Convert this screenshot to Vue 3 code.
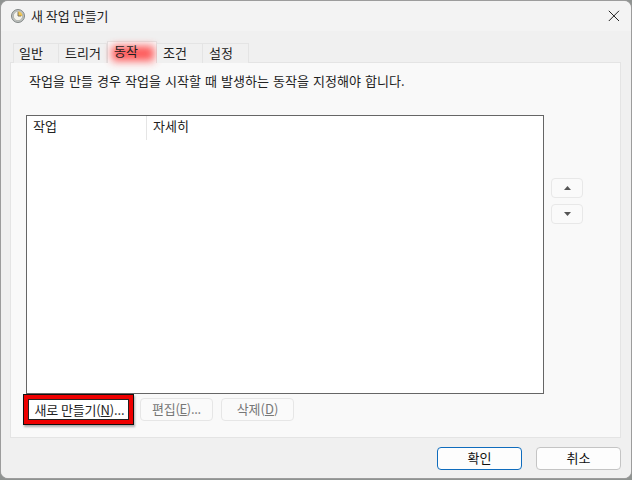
<script setup>
const tabs = [
  { label: '일반', w: 46 },
  { label: '트리거', w: 48 },
  { label: '동작', w: 50, active: true },
  { label: '조건', w: 46 },
  { label: '설정', w: 46 }
]
</script>

<template>
  <div class="desk">
    <div class="win">
      <div class="title">
        <svg class="clock" width="14" height="14" viewBox="0 0 16 16">
          <circle cx="8" cy="8" r="7.4" fill="#c4c8c6" stroke="#6f7573" />
          <circle cx="8" cy="8" r="5.3" fill="#f4f3ec" stroke="#8d8f8a" stroke-width=".6" />
          <path d="M8 8V2.9A5.1 5.1 0 0 1 13.1 8Z" fill="#f0c552" />
          <path d="M8 3.6V8H11.6" fill="none" stroke="#6a655a" stroke-width="1" />
        </svg>
        <span class="title-text">새 작업 만들기</span>
        <svg class="close" width="12" height="12" viewBox="0 0 12 12">
          <path d="M.8.8 11 11M11 .8.8 11" stroke="#222" stroke-width="1" fill="none" />
        </svg>
      </div>
      <div class="body">
        <div class="tabs">
          <div
            v-for="t in tabs"
            :key="t.label"
            class="tab"
            :class="{ active: t.active }"
            :style="{ width: t.w + 'px' }"
          >
            <span v-if="t.active" class="glow"></span>
            <span class="tab-label">{{ t.label }}</span>
          </div>
        </div>
        <div class="panel">
          <p class="desc">작업을 만들 경우 작업을 시작할 때 발생하는 동작을 지정해야 합니다.</p>
          <div class="mid">
            <div class="list">
              <div class="head">
                <div class="col c1">작업</div>
                <div class="col c2">자세히</div>
              </div>
            </div>
            <div class="arrows">
              <div class="arrow">
                <svg width="7" height="4" viewBox="0 0 7 4"><path d="M3.5 0 7 4H0Z" fill="#555" /></svg>
              </div>
              <div class="arrow">
                <svg width="7" height="4" viewBox="0 0 7 4"><path d="M0 0H7L3.5 4Z" fill="#555" /></svg>
              </div>
            </div>
          </div>
          <div class="actions">
            <div class="btn new">새로 만들기(<u>N</u>)...</div>
            <div class="btn off edit">편집(<u>E</u>)...</div>
            <div class="btn off">삭제(<u>D</u>)</div>
          </div>
        </div>
        <div class="foot">
          <div class="fbtn ok">확인</div>
          <div class="fbtn">취소</div>
        </div>
      </div>
    </div>
  </div>
</template>

<style>
html, body { margin: 0; background: #8f9391; }
</style>

<style scoped>
.desk {
  width: 632px;
  height: 480px;
  padding: 1px 1px 2px 1px;
  box-sizing: border-box;
  font-family: "Noto Sans CJK KR", "Noto Sans", sans-serif;
  font-size: 13px;
  color: #111;
}
.win {
  height: 100%;
  display: flex;
  flex-direction: column;
  background: #f0f0f0;
  border-radius: 7px;
  overflow: hidden;
  box-shadow: 0 0 0 1px #9c9c9c;
}
.title {
  height: 30px;
  flex: none;
  display: flex;
  align-items: center;
  padding: 0 11px 0 10px;
  background: #f3f3f3;
}
.clock { flex: none; }
.title-text { margin: 0 0 2px 6px; flex: 1; font-size: 13px; color: #222; }
.body {
  flex: 1;
  display: flex;
  flex-direction: column;
  padding: 11px 10px 0 9px;
  background: #f0f0f0;
}
.tabs {
  display: flex;
  height: 20px;
  padding-left: 3px;
  flex: none;
  position: relative;
  z-index: 1;
}
.tab {
  position: relative;
  box-sizing: border-box;
  height: 20px;
  margin-top: 1px;
  padding-left: 6px;
  border: 1px solid #e4e4e4;
  border-bottom: none;
  border-left: none;
  line-height: 17px;
  background: #f0f0f0;
  color: #222;
  white-space: nowrap;
}
.tab:first-child { border-left: 1px solid #e4e4e4; padding-left: 5px; }
.tab.active {
  height: 22px;
  margin-top: -1px;
  background: #f9f9f9;
  border-left: 1px solid #e0e0e0;
  line-height: 17px;
}
.glow {
  position: absolute;
  left: 4px;
  top: 4px;
  width: 42px;
  height: 15px;
  background: #ff3b3b;
  filter: blur(4px);
  opacity: .85;
}
.tab-label { position: relative; }
.panel {
  height: 376px;
  flex: none;
  box-sizing: border-box;
  background: #f9f9f9;
  border: 1px solid #e4e4e4;
  padding: 0 0 0 15px;
  display: flex;
  flex-direction: column;
}
.desc {
  margin: 9px 0 0 3px;
  height: 18px;
  line-height: 18px;
  font-size: 13px;
  word-spacing: 1.2px;
  color: #222;
  white-space: nowrap;
}
.mid {
  display: flex;
  margin-top: 25px;
  height: 280px;
}
.list {
  width: 518px;
  height: 279px;
  box-sizing: border-box;
  background: #fff;
  border: 1px solid #666;
}
.head { display: flex; height: 24px; }
.col { box-sizing: border-box; padding-left: 6px; line-height: 20px; height: 24px; color: #222; }
.c1 { width: 120px; border-right: 1px solid #e5e5e5; }
.arrows {
  display: flex;
  flex-direction: column;
  gap: 6px;
  margin: 63px 0 0 7px;
}
.arrow {
  width: 32px;
  height: 20px;
  box-sizing: border-box;
  border: 1px solid #e8e8e8;
  border-radius: 4px;
  background: #fafafa;
  display: flex;
  align-items: center;
  justify-content: center;
}
.actions {
  display: flex;
  gap: 8px;
  margin-top: 3px;
  margin-left: -2px;
}
.btn {
  box-sizing: border-box;
  height: 23px;
  width: 73px;
  border: 1px solid #e6e6e6;
  border-radius: 4px;
  background: #fafafa;
  text-align: center;
  line-height: 20px;
  font-size: 13px;
  white-space: nowrap;
}
.btn.new {
  width: 109px;
  height: 29px;
  margin: -3px -1px -3px 0;
  padding-left: 2px;
  border: 4px solid #ee0000;
  outline: 1px solid #111;
  box-shadow: inset 0 0 0 1px #222, 1px 2px 2px 1px rgba(0,0,0,.3);
  border-radius: 0;
  background: #fff;
  line-height: 21px;
  letter-spacing: -.15px;
  color: #222;
}
.btn.off { color: #777; }
.btn.edit { letter-spacing: -.3px; }
.foot {
  display: flex;
  justify-content: flex-end;
  gap: 14px;
  margin-top: 9px;
}
.fbtn {
  box-sizing: border-box;
  width: 85px;
  height: 23px;
  border: 1px solid #c4c4c4;
  border-radius: 4px;
  background: #fdfdfd;
  text-align: center;
  line-height: 20px;
  color: #111;
}
.fbtn.ok {
  border: 1px solid #0f6cbd;
}
</style>
